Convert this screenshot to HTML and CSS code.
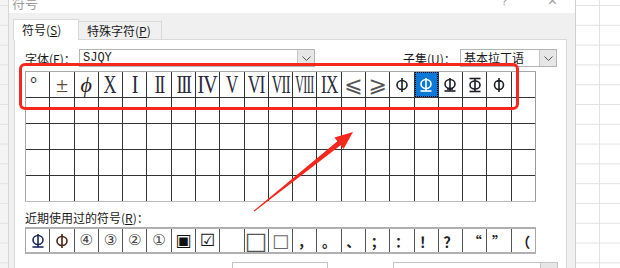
FILE: index.html
```html
<!DOCTYPE html>
<html>
<head>
<meta charset="utf-8">
<title>符号</title>
<link rel="stylesheet" href="styles.css">
</head>
<body>
<div class="xl xl-left"></div>
<div class="dialog">
	<div class="titlebar">
		<span class="title">符号</span>
		<span class="tb-help">?</span>
		<span class="tb-close">×</span>
	</div>
	<div class="tabs">
		<div class="tab active">符号(<u>S</u>)</div>
		<div class="tab">特殊字符(<u>P</u>)</div>
	</div>
	<div class="panel">
		<div class="font-row">
			<label>字体(<u>F</u>)：</label>
			<div class="select select-font"><span class="value mono">SJQY</span><span class="drop"><svg width="9" height="5" viewBox="0 0 9 5"><path d="M0.5 0.5 L4.5 4.5 L8.5 0.5" fill="none" stroke="#555" stroke-width="1"/></svg></span></div>
			<div class="spacer"></div>
			<label>子集(<u>U</u>)：</label>
			<div class="select select-subset"><span class="value">基本拉丁语</span><span class="drop"><svg width="9" height="5" viewBox="0 0 9 5"><path d="M0.5 0.5 L4.5 4.5 L8.5 0.5" fill="none" stroke="#555" stroke-width="1"/></svg></span></div>
		</div>

		<div class="grid">
			<div class="cell deg">°</div>
			<div class="cell pm">±</div>
			<div class="cell ital">ϕ</div>
			<div class="cell rn"><span class="x">X</span></div>
			<div class="cell rn"><span class="one">I</span></div>
			<div class="cell rn"><span class="n2">II</span></div>
			<div class="cell rn"><span class="n3">III</span></div>
			<div class="cell rn"><span class="n4">IV</span></div>
			<div class="cell rn"><span class="n5">V</span></div>
			<div class="cell rn"><span class="n6">VI</span></div>
			<div class="cell rn"><span class="n7">VII</span></div>
			<div class="cell rn"><span class="n8">VIII</span></div>
			<div class="cell rn"><span class="n9">IX</span></div>
			<div class="cell sym">⩽</div>
			<div class="cell sym">⩾</div>
			<div class="cell"><svg class="bar" viewBox="0 0 14 20"><ellipse cx="7" cy="10" rx="5" ry="4.5"/><line x1="7" y1="3" x2="7" y2="17"/></svg></div>
			<div class="cell sel"><svg class="bar" viewBox="0 0 14 20"><ellipse cx="7" cy="9" rx="5" ry="4.5"/><line x1="7" y1="3" x2="7" y2="16"/><line x1="1.5" y1="16" x2="12.5" y2="16"/></svg></div>
			<div class="cell"><svg class="bar" viewBox="0 0 14 20"><ellipse cx="7" cy="9" rx="5" ry="4.5"/><line x1="7" y1="3" x2="7" y2="16"/><line x1="1.5" y1="16" x2="12.5" y2="16"/><line x1="4" y1="14" x2="10" y2="14"/></svg></div>
			<div class="cell"><svg class="bar" viewBox="0 0 14 20"><ellipse cx="7" cy="10" rx="5" ry="4"/><line x1="7" y1="3.5" x2="7" y2="16.5"/><line x1="1.5" y1="3.5" x2="12.5" y2="3.5"/><line x1="1.5" y1="16.5" x2="12.5" y2="16.5"/></svg></div>
			<div class="cell"><svg class="bar" viewBox="0 0 14 20"><ellipse cx="7" cy="10" rx="4.5" ry="4.5"/><line x1="7" y1="3" x2="7" y2="17"/><line x1="5" y1="6" x2="9" y2="6"/></svg></div>
			<div class="cell"></div>
			<script>
				/* the four empty rows */
				for (let i = 0; i < 84; i++) document.write('<div class="cell"></div>');
			</script>
		</div>

		<div class="recent-label">近期使用过的符号(<u>R</u>)：</div>
		<div class="recent">
			<div class="cell"><svg class="bar navy" viewBox="0 0 14 20"><ellipse cx="7" cy="9" rx="5" ry="4.5"/><line x1="7" y1="3" x2="7" y2="16"/><line x1="1.5" y1="16" x2="12.5" y2="16"/></svg></div>
			<div class="cell"><svg class="bar brown" viewBox="0 0 14 20"><ellipse cx="7" cy="10" rx="5" ry="4.5"/><line x1="7" y1="3" x2="7" y2="17"/></svg></div>
			<div class="cell circ">④</div>
			<div class="cell circ">③</div>
			<div class="cell circ">②</div>
			<div class="cell circ">①</div>
			<div class="cell small">▣</div>
			<div class="cell small">☑</div>
			<div class="cell"></div>
			<div class="cell big">□</div>
			<div class="cell mid">□</div>
			<div class="cell punct">，</div>
			<div class="cell punct">。</div>
			<div class="cell punct">、</div>
			<div class="cell punct">；</div>
			<div class="cell punct">：</div>
			<div class="cell punct">！</div>
			<div class="cell punct">？</div>
			<div class="cell punct">“</div>
			<div class="cell punct">”</div>
			<div class="cell punct">（</div>
		</div>

		<div class="bottom-row">
			<div class="box box-code"></div>
			<div class="box box-from"><span class="drop"></span></div>
		</div>
	</div>
</div>
<div class="xl xl-right"></div>

<div class="mark"></div>
<svg class="arrow" width="620" height="268" viewBox="0 0 620 268">
	<path d="M253.6 210.8 L337.4 141.3 L334.4 137.4 L353 132 L343.6 148.9 L340.6 145.2 L254.4 211.6 Z" fill="#f5281e"/>
</svg>
</body>
</html>
```

FILE: styles.css
```css
html, body {
	margin: 0;
	padding: 0;
}

body {
	width: 620px;
	height: 268px;
	overflow: hidden;
	display: flex;
	position: relative;
	background: #fff;
	font-family: "Noto Sans CJK SC", "Noto Sans", sans-serif;
	font-size: 12px;
	color: #1a1a1a;
}

u {
	text-decoration: underline;
	text-underline-offset: 1px;
}

/* excel sheet behind the dialog */
.xl {
	background-color: #fff;
	background-image:
		linear-gradient(to bottom, #e2e2e2 1px, transparent 1px);
	background-size: 100% 19.8px;
	background-position: 0 5px;
}

.xl-left {
	width: 8px;
	flex: none;
	background-color: #f4f4f4;
}

.xl-right {
	flex: 1;
	background-image:
		linear-gradient(to bottom, #e2e2e2 1px, transparent 1px),
		linear-gradient(to right, transparent 23px, #e2e2e2 23px, #e2e2e2 24px, transparent 24px);
	background-size: 100% 19.8px, 100% 100%;
	background-position: 0 5px, 0 0;
}

/* dialog window */
.dialog {
	width: 566px;
	flex: none;
	display: flex;
	flex-direction: column;
	background: #f0f0f0;
	border-left: 1px solid #d6d6d6;
	border-right: 1px solid #cfcfcf;
	overflow: hidden;
}

.titlebar {
	flex: none;
	height: 13px;
	background: #fff;
	overflow: hidden;
	display: flex;
	align-items: flex-start;
	color: #9a9a9a;
}

.title {
	font-size: 13px;
	line-height: 13px;
	margin: -4px 0 0 3px;
}

.tb-help {
	margin: -5px 0 0 auto;
	font-size: 12px;
	line-height: 12px;
	font-family: "Liberation Sans", sans-serif;
}

.tb-close {
	margin: -7px 18px 0 40px;
	font-size: 16px;
	line-height: 16px;
	font-family: "Liberation Sans", sans-serif;
}

.tabs {
	flex: none;
	height: 26px;
	display: flex;
	align-items: flex-end;
	padding-left: 5px;
}

.tab {
	height: 17px;
	line-height: 17px;
	padding: 0 10px 0 8px;
	border: 1px solid #d9d9d9;
	border-bottom: none;
	background: #f0f0f0;
	margin-left: -1px;
}

.tab.active {
	height: 20px;
	line-height: 20px;
	background: #fff;
	width: 48px;
	margin-bottom: -1px;
	position: relative;
	z-index: 1;
	padding: 0 8px;
}

.panel {
	flex: none;
	height: 240px;
	background: #fff;
	border: 1px solid #d9d9d9;
	margin-right: 8px;
	margin-left: 5px;
	padding: 9px 0 0 10px;
}

.font-row {
	display: flex;
	align-items: center;
	height: 18px;
	width: 532px;
}

.font-row label {
	width: 54px;
	flex: none;
}

.spacer {
	flex: 1;
}

.select {
	height: 16px;
	border: 1px solid #b4b4b4;
	display: flex;
	align-items: center;
	background: #fff;
}

.select .value {
	flex: 1;
	padding-left: 3px;
	line-height: 16px;
}

.mono {
	font-family: "Liberation Mono", monospace;
	font-size: 12px;
	color: #222;
}

.select-font {
	width: 234px;
}

.select-subset {
	width: 95px;
	margin-left: 3px;
}

.drop {
	width: 16px;
	height: 16px;
	background: #e6e6e6;
	border-left: 1px solid #c6c6c6;
	display: flex;
	align-items: center;
	justify-content: center;
}

/* symbol grid */
.grid {
	margin-top: 4px;
	width: 509px;
	display: grid;
	grid-template-columns: repeat(21, 1fr);
	grid-auto-rows: 25px;
	gap: 1px;
	background: #333;
	border: 1px solid #a8a8a8;
	border-right-color: #9a9a9a;
	border-bottom-color: #bdbdbd;
}

.cell {
	background: #fff;
	display: flex;
	align-items: center;
	justify-content: center;
	font-family: "Liberation Serif", serif;
	font-size: 24px;
	color: #2b2320;
	overflow: hidden;
	line-height: 1;
}

.cell.deg {
	align-items: flex-start;
	padding-top: 3px;
	font-size: 18px;
	justify-content: flex-start;
	padding-left: 4px;
}

.cell.pm {
	font-size: 22px;
	color: #5a4a30;
}

.cell.ital {
	font-style: italic;
	font-size: 22px;
}

.rn {
	color: #2a2a3a;
	font-size: 25px;
}

.rn span {
	display: inline-block;
}

.x { transform: scaleX(0.72); }
.one { transform: scaleX(0.8); }
.n2 { transform: scaleX(0.72); letter-spacing: -2px; }
.n3 { transform: scaleX(0.74); letter-spacing: -2px; }
.n4 { transform: scaleX(0.8); letter-spacing: -1px; }
.n5 { transform: scaleX(0.68); }
.n6 { transform: scaleX(0.7); letter-spacing: -1px; }
.n7 { transform: scaleX(0.58); letter-spacing: -1px; }
.n8 { transform: scaleX(0.48); letter-spacing: -1px; }
.n9 { transform: scaleX(0.68); letter-spacing: -1px; }

.sym {
	font-family: "DejaVu Sans", sans-serif;
	font-size: 22px;
	color: #555;
}

.bar {
	width: 14px;
	height: 20px;
	fill: none;
	stroke: #1e1e28;
	stroke-width: 1.6;
}

.cell.sel {
	background: #0a78d7;
	outline: 1px dotted #000;
	outline-offset: -1px;
}

.cell.sel .bar {
	stroke: #fff;
}

.recent-label {
	margin-top: 8px;
	height: 16px;
	line-height: 16px;
}

.recent {
	margin-top: 1px;
	width: 509px;
	display: grid;
	grid-template-columns: repeat(21, 1fr);
	grid-auto-rows: 23px;
	gap: 1px;
	background: #555;
	border: 1px solid #a8a8a8;
	border-top: 2px solid #b0b0b0;
	border-bottom: 2px solid #b0b0b0;
}

.bar.navy {
	stroke: #1d2a5c;
}

.bar.brown {
	stroke: #4a2410;
}

.circ {
	font-family: "DejaVu Sans", sans-serif;
	font-size: 15px;
	color: #444;
}

.small {
	font-family: "DejaVu Sans", sans-serif;
	font-size: 17px;
	color: #111;
}

.big {
	font-family: "DejaVu Sans", sans-serif;
	font-size: 24px;
	color: #555;
}

.mid {
	font-family: "DejaVu Sans", sans-serif;
	font-size: 18px;
	color: #666;
}

.punct {
	font-family: "Noto Sans CJK SC", sans-serif;
	font-size: 14px;
	font-weight: bold;
	color: #222;
}

.bottom-row {
	margin-top: 8px;
	display: flex;
	height: 20px;
}

.box {
	height: 20px;
	border: 1px solid #c4c4c4;
	background: #fff;
}

.box-code {
	width: 94px;
	margin-left: 207px;
}

.box-from {
	width: 163px;
	margin-left: 65px;
	display: flex;
	justify-content: flex-end;
}

.box-from .drop {
	height: 20px;
}

/* red annotation over the screenshot */
.mark {
	position: absolute;
	left: 19px;
	top: 63px;
	width: 494px;
	height: 41px;
	border: 3px solid #f5281e;
	border-radius: 6px;
}

.arrow {
	position: absolute;
	left: 0;
	top: 0;
}
```
